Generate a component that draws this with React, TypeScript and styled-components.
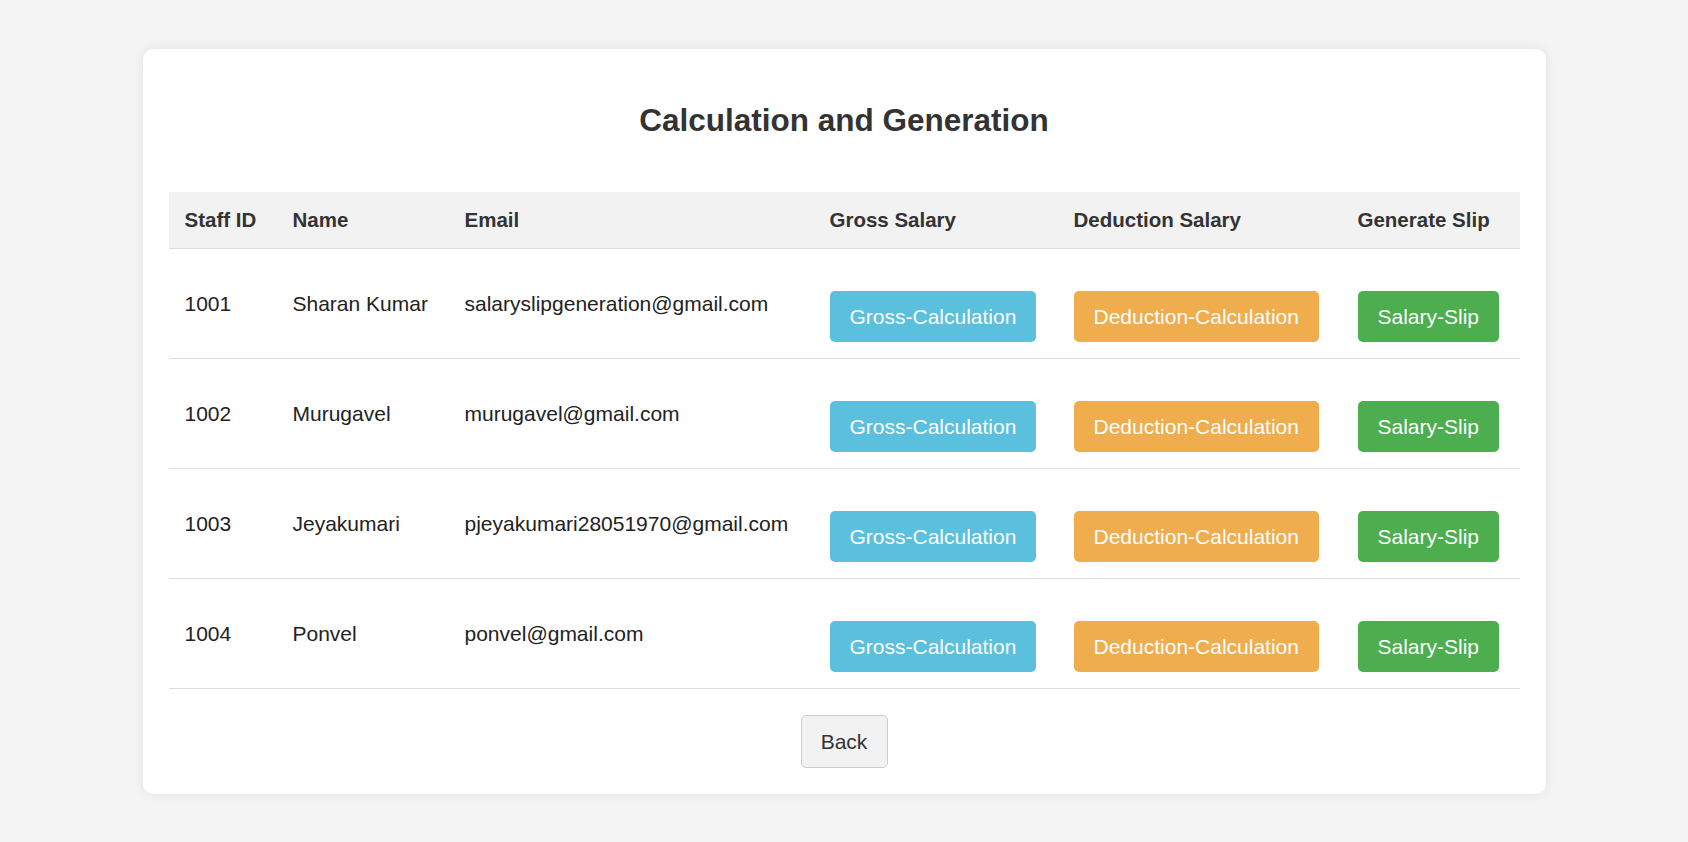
import React from "react";
import styled, { createGlobalStyle } from "styled-components";

const GlobalStyle = createGlobalStyle`
  body {
    margin: 0;
    background-color: #f4f4f4;
    font-family: "Liberation Sans", Arial, sans-serif;
  }
`;

type Staff = { id: string; name: string; email: string };

const staff: Staff[] = [
  { id: "1001", name: "Sharan Kumar", email: "salaryslipgeneration@gmail.com" },
  { id: "1002", name: "Murugavel", email: "murugavel@gmail.com" },
  { id: "1003", name: "Jeyakumari", email: "pjeyakumari28051970@gmail.com" },
  { id: "1004", name: "Ponvel", email: "ponvel@gmail.com" },
];

const columns = [
  { label: "Staff ID", width: 108 },
  { label: "Name", width: 172 },
  { label: "Email", width: 365 },
  { label: "Gross Salary", width: 244 },
  { label: "Deduction Salary", width: 284 },
  { label: "Generate Slip", width: 178 },
];

export default function App() {
  return (
    <>
      <GlobalStyle />
      <Page>
        <Card>
          <Title>Calculation and Generation</Title>
          <Table>
            <colgroup>
              {columns.map((c) => (
                <col key={c.label} style={{ width: c.width }} />
              ))}
            </colgroup>
            <thead>
              <tr>
                {columns.map((c) => (
                  <Th key={c.label}>{c.label}</Th>
                ))}
              </tr>
            </thead>
            <tbody>
              {staff.map((s) => (
                <Row key={s.id}>
                  <Td>{s.id}</Td>
                  <Td>{s.name}</Td>
                  <Td>{s.email}</Td>
                  <Td>
                    <ActionBtn $color="#5bc0de">Gross-Calculation</ActionBtn>
                  </Td>
                  <Td>
                    <ActionBtn $color="#f0ad4e">Deduction-Calculation</ActionBtn>
                  </Td>
                  <Td>
                    <ActionBtn $color="#4cae4f">Salary-Slip</ActionBtn>
                  </Td>
                </Row>
              ))}
            </tbody>
          </Table>
          <Footer>
            <BackBtn>Back</BackBtn>
          </Footer>
        </Card>
      </Page>
    </>
  );
}

const Page = styled.div`
  display: flex;
  justify-content: center;
  padding: 49px 0 48px;
`;

const Card = styled.div`
  width: 1403px;
  box-sizing: border-box;
  padding: 26px;
  background-color: white;
  border-radius: 10px;
  box-shadow: 0 0 12px rgba(0, 0, 0, 0.08);
`;

const Title = styled.h2`
  margin: 26px 0 53px;
  text-align: center;
  font-size: 31.5px;
  line-height: 38px;
  font-weight: bold;
  color: #333;
`;

const Table = styled.table`
  width: 100%;
  table-layout: fixed;
  border-collapse: collapse;
`;

const Th = styled.th`
  height: 56px;
  padding: 0 16px;
  text-align: left;
  font-size: 20.5px;
  font-weight: bold;
  color: #333;
  background-color: #f2f2f2;
  border-bottom: 1px solid #ddd;
  white-space: nowrap;
`;

const Row = styled.tr`
  border-bottom: 1px solid #ddd;
`;

const Td = styled.td`
  height: 110px;
  padding: 0 16px;
  box-sizing: border-box;
  font-size: 21px;
  color: #222;
  vertical-align: middle;
  white-space: nowrap;
`;

const ActionBtn = styled.button<{ $color: string }>`
  margin-top: 26px;
  height: 51px;
  padding: 0 20px;
  border: none;
  border-radius: 5px;
  background-color: ${(p) => p.$color};
  color: white;
  font-family: "Liberation Sans", Arial, sans-serif;
  font-size: 21px;
  cursor: pointer;
`;

const Footer = styled.div`
  display: flex;
  justify-content: center;
  padding-top: 26px;
`;

const BackBtn = styled.button`
  width: 87px;
  height: 53px;
  border: 1px solid #ccc;
  border-radius: 5px;
  background-color: #f2f2f2;
  color: #333;
  font-family: "Liberation Sans", Arial, sans-serif;
  font-size: 21px;
  cursor: pointer;
`;
